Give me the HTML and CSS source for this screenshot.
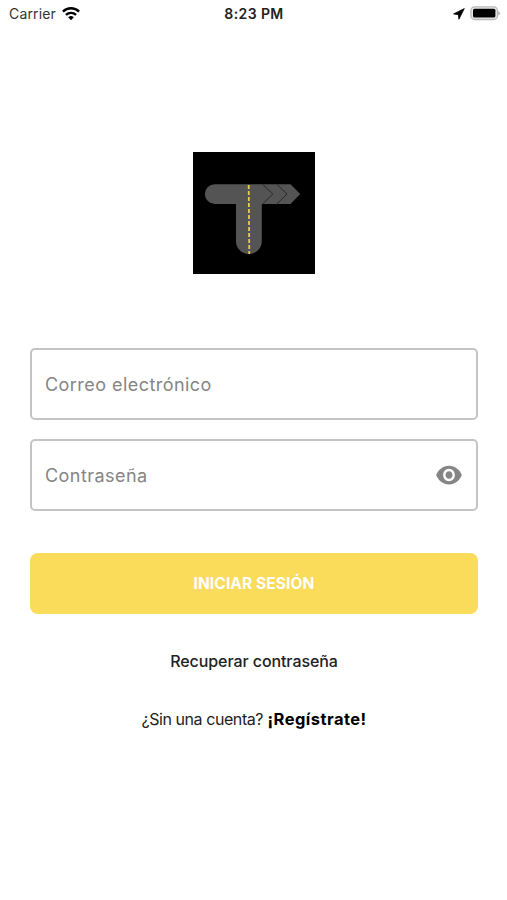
FILE: index.html
```html
<!DOCTYPE html>
<html lang="es">
<head>
    <meta charset="UTF-8">
    <meta name="viewport" content="width=device-width, initial-scale=1.0">
    <title>Iniciar sesión</title>
    <link rel="stylesheet" href="styles.css">
</head>
<body>
    <header class="status-bar">
        <div class="status-left">
            <span class="carrier">Carrier</span>
            <svg class="wifi" width="18" height="14" viewBox="0 0 18 14">
                <g fill="none" stroke="#000" stroke-width="2.3">
                    <path d="M0.9 4.6a11.5 11.5 0 0 1 16.2 0"/>
                    <path d="M3.9 7.9a7.3 7.3 0 0 1 10.2 0"/>
                </g>
                <path d="M6.2 10.3a4 4 0 0 1 5.6 0L9 13.2z"/>
            </svg>
        </div>
        <span class="time">8:23 PM</span>
        <div class="status-right">
            <svg class="location" width="12" height="12" viewBox="0 0 12 12">
                <path d="M11.3 0.6L0.6 5.9L5.4 6.7L5.9 11.2z" stroke="#000" stroke-width="0.8" stroke-linejoin="round"/>
            </svg>
            <svg class="battery" width="31" height="15" viewBox="0 0 31 15">
                <rect x="0.9" y="0.9" width="26.6" height="12.6" rx="3.8" fill="#e8e8e8" stroke="#b9b9b9" stroke-width="1.3"/>
                <rect x="3" y="2.8" width="22.4" height="8.8" rx="1.5"/>
                <path d="M28.3 5q3.2 2.3 0 4.6z" fill="#aaa"/>
            </svg>
        </div>
    </header>
    <main class="login">
        <svg class="logo" width="122" height="122" viewBox="0 0 122 122">
            <rect width="122" height="122"/>
            <path d="M21.8 32.2H97.5L107.2 42L97.5 52H68.8V89.2a12.9 12.9 0 0 1-25.8 0V52H21.8a9.9 9.9 0 0 1 0-19.8z" fill="#545454"/>
            <path d="M69.5 32.2L79.8 42L69.5 52M83.7 32.2L94 42L83.7 52" fill="none" stroke="#252525" stroke-width="0.9"/>
            <path d="M55.7 33L56.3 102" stroke="#e5cd51" stroke-width="1.8" stroke-dasharray="4.1 1.9"/>
        </svg>
        <form class="form">
            <label class="field">
                <input class="email" type="email" placeholder="Correo electrónico">
            </label>
            <label class="field">
                <input class="password" type="password" placeholder="Contraseña">
                <svg class="eye" width="28" height="30" viewBox="0 0 24 24" preserveAspectRatio="none">
                    <path fill="#858585" d="M12 4.5C7 4.5 2.73 7.61 1 12c1.73 4.39 6 7.5 11 7.5s9.27-3.11 11-7.5c-1.73-4.39-6-7.5-11-7.5zM12 17c-2.76 0-5-2.24-5-5s2.24-5 5-5 5 2.24 5 5-2.24 5-5 5zm0-8c-1.66 0-3 1.34-3 3s1.34 3 3 3 3-1.34 3-3-1.34-3-3-3z"/>
                </svg>
            </label>
            <button class="submit" type="button">INICIAR SESIÓN</button>
        </form>
        <a class="recover">Recuperar contraseña</a>
        <p class="signup"><span class="question">¿Sin una cuenta?</span> <b class="register">¡Regístrate!</b></p>
    </main>
</body>
</html>
```
FILE: styles.css
```css
* {
    box-sizing: border-box;
}
body {
    margin: 0;
    height: 900px;
    background: #fff;
    color: #222;
    font-family: Inter, "Liberation Sans", sans-serif;
}
.status-bar {
    display: grid;
    grid-template-columns: 1fr auto 1fr;
    align-items: center;
    height: 27px;
    padding: 0 6px 0 9px;
    font-size: 14px;
}
.status-left,
.status-right {
    display: flex;
    align-items: center;
    gap: 6px;
}
.status-right {
    justify-content: flex-end;
    gap: 5px;
}
.carrier {
    color: #333;
    letter-spacing: 0.15px;
}
.time {
    margin-right: 2px;
    font-weight: 600;
    letter-spacing: 0.4px;
}
.login {
    display: flex;
    flex-direction: column;
    align-items: center;
    padding: 125px 29px 0 30px;
}
.logo {
    display: block;
}
.form {
    display: flex;
    flex-direction: column;
    width: 100%;
    margin-top: 74px;
}
.field {
    display: flex;
    align-items: center;
    height: 72px;
    margin-bottom: 20px;
    padding: 0 13px;
    border: 2px solid #c4c4c4;
    border-radius: 5px;
}
.field + .field {
    margin-top: -1px;
}
.field input {
    flex: 1;
    min-width: 0;
    padding: 0;
    border: none;
    outline: none;
    background: none;
    font-family: inherit;
    font-size: 18px;
    letter-spacing: 0.45px;
}
.field input::placeholder {
    color: #858585;
    opacity: 1;
}
.submit {
    height: 61px;
    margin-top: 22px;
    border: none;
    border-radius: 8px;
    background: #fadb5a;
    color: #fff;
    font-family: inherit;
    font-size: 15.5px;
    font-weight: 700;
    letter-spacing: 0.1px;
}
.recover {
    margin-top: 37px;
    font-size: 16px;
    font-weight: 500;
    letter-spacing: -0.08px;
    line-height: 20px;
}
.signup {
    margin: 38px 0 0;
    font-size: 16px;
    line-height: 20px;
    white-space: nowrap;
}
.question {
    letter-spacing: -0.43px;
}
.register {
    color: #000;
    font-size: 16.5px;
    font-weight: 700;
    letter-spacing: 0.45px;
}
```
